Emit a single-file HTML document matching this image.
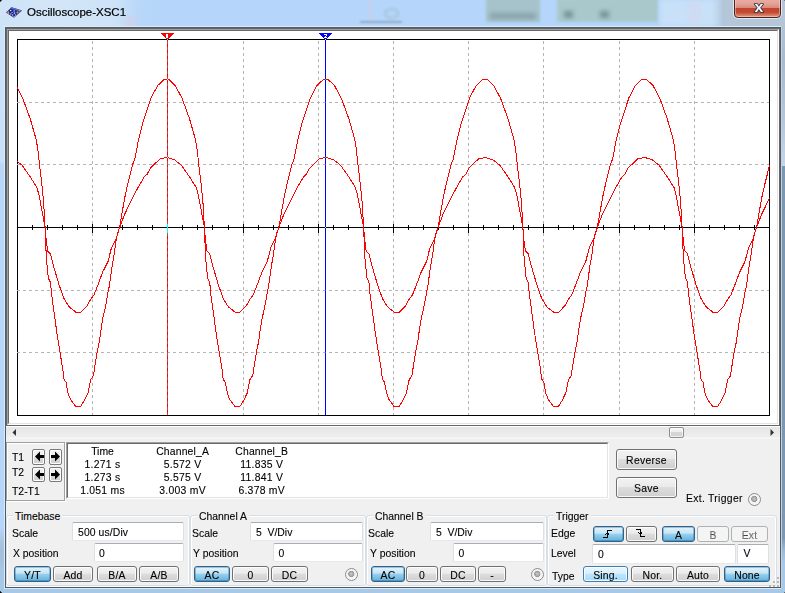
<!DOCTYPE html>
<html><head><meta charset="utf-8">
<style>
*{margin:0;padding:0;box-sizing:border-box}
html,body{width:785px;height:593px;overflow:hidden}
body{position:relative;background:#b5d6fa;font-family:"Liberation Sans",sans-serif;font-size:10.4px;color:#000;-webkit-text-stroke:0.1px #000}
.a{position:absolute}
.t{position:absolute;white-space:pre;line-height:12px;height:12px}
.c{text-align:center}
.btn{position:absolute;border:1px solid #707070;border-radius:3px;background:linear-gradient(#f2f2f2 0%,#ebebeb 45%,#dddddd 50%,#cfcfcf 100%);box-shadow:inset 0 0 0 1px rgba(255,255,255,.85);text-align:center;white-space:pre;line-height:14px;font-size:10.4px}
.on{border-color:#2c628b;background:linear-gradient(#e5f4fc 0%,#c4e5f6 45%,#98d1ef 50%,#64b0da 100%);box-shadow:inset 0 0 0 1px rgba(44,98,139,.35)}
.hov{border-color:#3c7fb1;background:linear-gradient(#eaf6fd 0%,#d9f0fc 45%,#bee6fd 50%,#a7d9f5 100%)}
.dis{border-color:#adb2b5;background:#f4f4f4;color:#838383;box-shadow:none}
.inp{position:absolute;background:#fff;border:1px solid #dbdfe6;border-top-color:#abadb3;border-bottom-color:#e3e9ef;border-radius:2px}
.gb{position:absolute;border:1px solid #d5dfe5;border-radius:3px;box-shadow:inset 1px 1px 0 #fff,inset -1px 0 0 #fff,0 1px 0 #fff}
.gt{position:absolute;background:#f0f0f0;white-space:pre;line-height:12px;padding:0 2px}
.radio{position:absolute;width:13px;height:13px;border-radius:50%;border:1px solid #8c8c8c;background:radial-gradient(circle at 48% 45%,#cfcfcf 0,#a8a8a8 2px,#969696 2.8px,#f2f2f2 3.4px,#fff 100%)}
</style></head><body>
<!-- title bar glass -->
<div class="a" style="left:0;top:0;width:785px;height:27px;background:linear-gradient(90deg,#cfe3f7 0px,#d3e6f8 60px,#cde2f8 115px,#b8d7f9 140px,#b5d6fa 160px,#b5d6fa 100%)"></div>
<div class="a" style="left:369px;top:0;width:2px;height:20px;background:#d8c8e0;filter:blur(1.2px);opacity:.8"></div>
<div class="a" style="left:124px;top:17px;width:12px;height:10px;background:#e0c8d8;filter:blur(3px);opacity:.45"></div>
<div class="a" style="left:384px;top:8px;width:15px;height:11px;border:2px solid #a4bcd4;border-radius:50%;filter:blur(1.5px);opacity:.8"></div>
<div class="a" style="left:360px;top:21px;width:42px;height:2px;background:#8aa2b8;filter:blur(1.2px);opacity:.85"></div>
<div class="a" style="left:486px;top:-2px;width:54px;height:24px;background:#a6c2ca;filter:blur(1.5px)"></div>
<div class="a" style="left:490px;top:13px;width:46px;height:6px;background:#88a4ac;filter:blur(2px)"></div>
<div class="a" style="left:557px;top:-2px;width:101px;height:24px;background:#a8c8cc;filter:blur(1.5px)"></div>
<div class="a" style="left:564px;top:11px;width:9px;height:7px;background:#7a9498;filter:blur(2px)"></div>
<div class="a" style="left:600px;top:11px;width:9px;height:7px;background:#7a9498;filter:blur(2px)"></div>
<div class="a" style="left:660px;top:0;width:60px;height:26px;background:#c8e0f8;filter:blur(2px)"></div>
<div class="a" style="left:690px;top:0;width:8px;height:26px;background:#d0d8f0;filter:blur(3px)"></div>
<div class="a" style="left:722px;top:0;width:63px;height:27px;background:#b4c6d8"></div>
<div class="a" style="left:712px;top:0;width:14px;height:27px;background:linear-gradient(90deg,rgba(180,198,216,0),#b4c6d8)"></div>
<!-- right frame -->
<div class="a" style="left:781px;top:18px;width:4px;height:575px;background:linear-gradient(#b4c6d8 0px,#a8bacc 40px,#b4c6d6 100px,#c6d6e6 148px,#7b97b1 148px,#7b97b1 520px,#9ab8d6 532px,#a8c8e8 545px,#a8c8e8 575px)"></div>
<div class="a" style="left:781px;top:27px;width:1px;height:561px;background:#c6d2de"></div>
<div class="a" style="left:4px;top:26px;width:777px;height:563px;border:1px solid #dcebfa"></div>
<div class="a" style="left:0;top:27px;width:4px;height:566px;background:linear-gradient(#cce2f8 0px,#c8e0f8 135px,#b8d8f8 137px,#b5d6fa 500px,#a8c0d8 520px,#a4c0dc 530px,#a8c8e8 545px,#a8c8e8 566px)"></div>
<div class="a" style="left:0;top:589px;width:785px;height:4px;background:#a8c8e8"></div>
<!-- icon -->
<svg class="a" style="left:4px;top:5px" width="20" height="15" viewBox="0 0 20 15">
<path d="M2,7.5 L7.5,2.3 L18,5.5 L10,12.7 Z" fill="#1c2c96"/>
<path d="M7.5,2.3 L18,5.5 L16.5,6.8 L6.3,3.5 Z" fill="#5468c0"/>
<g fill="#e8eefc"><rect x="6" y="5" width="1.3" height="1"/><rect x="9.5" y="5.5" width="1.3" height="1"/><rect x="9.8" y="7.5" width="1.3" height="1.2"/><rect x="6.3" y="8.5" width="1.2" height="1"/><rect x="8" y="9.5" width="1.2" height="1"/><rect x="11" y="9.5" width="1.2" height="1"/><rect x="9.5" y="11" width="1.2" height="0.8"/><rect x="7.5" y="7" width="1" height="0.8"/></g>
<g fill="#f0a020"><circle cx="4.2" cy="7.2" r="0.9"/><circle cx="4.6" cy="8.8" r="0.8"/><circle cx="13.5" cy="7.5" r="1"/><circle cx="15.4" cy="5.8" r="0.8"/></g>
</svg>
<div class="t" style="left:27px;top:6px;font-size:11.5px;line-height:13px;height:13px;color:#000;-webkit-text-stroke:0.2px #000">Oscilloscope-XSC1</div>
<!-- close button -->
<div class="a" style="left:734px;top:-3px;width:47px;height:21px;border:1px solid #4a2420;border-radius:0 0 4px 4px;background:linear-gradient(#eab0a6 0%,#e4a296 30%,#d88c80 50%,#c4432a 52%,#c24a32 75%,#d47a64 90%,#e29684 100%);box-shadow:inset 0 0 0 1px rgba(255,225,215,.45),0 0 0 1px rgba(240,248,255,.7)"></div>
<div class="a" style="left:0;top:0;width:1px;height:1px;background:#000"></div>
<div class="a" style="left:1px;top:0;width:1px;height:1px;background:#555"></div>
<div class="a" style="left:0;top:1px;width:1px;height:1px;background:#555"></div>
<div class="a" style="left:784px;top:0;width:1px;height:1px;background:#777"></div>
<div class="a" style="left:0;top:592px;width:1px;height:1px;background:#000"></div>
<div class="a" style="left:1px;top:592px;width:1px;height:1px;background:#444"></div>
<div class="a" style="left:0;top:591px;width:1px;height:1px;background:#444"></div>
<div class="a" style="left:784px;top:592px;width:1px;height:1px;background:#666"></div>
<svg class="a" style="left:750px;top:0px" width="18" height="16" viewBox="0 0 18 16">
<text x="8.5" y="12" text-anchor="middle" font-family="Liberation Sans" font-weight="bold" font-size="15" fill="#f8f8f8" stroke="#2c3445" stroke-width="1.7" stroke-linejoin="round" paint-order="stroke" transform="scale(1.06,1)">x</text>
</svg>
<!-- client -->
<div class="a" style="left:5px;top:27px;width:776px;height:561px;background:#f0f0f0;border:1px solid #4f5b68"></div>
<!-- display -->
<div class="a" style="left:6px;top:28px;width:774px;height:398px;border:1px solid #666"></div>
<div class="a" style="left:7px;top:29px;width:772px;height:396px;border:1px solid;border-color:#a0a0a0 #fff #fff #a0a0a0"></div>
<div class="a" style="left:8px;top:30px;width:770px;height:394px;border:1px solid;border-color:#696969 #e3e3e3 #e3e3e3 #696969;background:#fff"></div>
<svg class="a" style="left:0;top:0" width="785" height="593" shape-rendering="crispEdges">
<style>.g{stroke:#b4b4b4;stroke-width:1;stroke-dasharray:3 3}</style>
<rect x="17.5" y="39.5" width="752" height="376" fill="none" stroke="#000"/>
<line x1="92.5" y1="41" x2="92.5" y2="415" class="g"/>
<line x1="167.5" y1="41" x2="167.5" y2="415" class="g"/>
<line x1="243.5" y1="41" x2="243.5" y2="415" class="g"/>
<line x1="318.5" y1="41" x2="318.5" y2="415" class="g"/>
<line x1="393.5" y1="41" x2="393.5" y2="415" class="g"/>
<line x1="468.5" y1="41" x2="468.5" y2="415" class="g"/>
<line x1="543.5" y1="41" x2="543.5" y2="415" class="g"/>
<line x1="619.5" y1="41" x2="619.5" y2="415" class="g"/>
<line x1="694.5" y1="41" x2="694.5" y2="415" class="g"/>
<line x1="17" y1="102.5" x2="769" y2="102.5" class="g"/>
<line x1="17" y1="164.5" x2="769" y2="164.5" class="g"/>
<line x1="17" y1="227.5" x2="769" y2="227.5" class="g"/>
<line x1="17" y1="290.5" x2="769" y2="290.5" class="g"/>
<line x1="17" y1="352.5" x2="769" y2="352.5" class="g"/>
<line x1="17" y1="227.5" x2="770" y2="227.5" stroke="#000" stroke-width="1"/>
<path d="M17.5,224 V233 M32.5,225 V230 M47.5,225 V230 M62.5,225 V230 M77.5,225 V230 M92.5,224 V233 M107.5,225 V230 M122.5,225 V230 M137.5,225 V230 M152.5,225 V230 M167.5,224 V233 M182.5,225 V230 M197.5,225 V230 M212.5,225 V230 M228.5,225 V230 M243.5,224 V233 M258.5,225 V230 M273.5,225 V230 M288.5,225 V230 M303.5,225 V230 M318.5,224 V233 M333.5,225 V230 M348.5,225 V230 M363.5,225 V230 M378.5,225 V230 M393.5,224 V233 M408.5,225 V230 M423.5,225 V230 M438.5,225 V230 M453.5,225 V230 M468.5,224 V233 M483.5,225 V230 M498.5,225 V230 M513.5,225 V230 M528.5,225 V230 M543.5,224 V233 M558.5,225 V230 M573.5,225 V230 M588.5,225 V230 M603.5,225 V230 M619.5,224 V233 M634.5,225 V230 M649.5,225 V230 M664.5,225 V230 M679.5,225 V230 M694.5,224 V233 M709.5,225 V230 M724.5,225 V230 M739.5,225 V230 M754.5,225 V230 M769.5,224 V233" stroke="#000" stroke-width="1"/>
<path d="M17.0,87.4 L22.8,98.4 L30.2,118.7 L36.3,140.0 L38.0,150.7 L39.5,165.0 L41.4,180.5 L43.6,201.5 L45.1,227.5 L46.3,257.9 L48.3,278.1 L50.4,282.2 L51.8,295.7 L54.0,312.0 L56.8,332.2 L58.8,345.0 L60.8,357.2 L62.8,369.3 L63.8,379.0 L66.0,382.3 L68.2,393.8 L70.4,399.3 L75.9,406.9 L80.3,406.9 L84.1,400.9 L87.9,393.2 L90.8,379.5 L93.4,375.7 L95.6,361.5 L97.4,350.7 L99.4,341.2 L100.8,331.1 L102.8,318.3 L104.1,312.9 L106.1,303.4 L108.2,291.3 L109.4,285.7 L112.1,266.1 L114.1,254.6 L116.1,239.8 L117.6,233.0 L119.6,227.5 L122.6,209.9 L125.3,195.0 L127.4,185.6 L129.4,177.5 L132.8,164.0 L134.8,159.3 L138.1,141.9 L142.3,124.4 L145.1,116.1 L151.1,97.8 L157.6,85.7 L163.6,79.9 L167.2,79.8 L169.2,79.8 L175.3,85.6 L182.1,98.4 L189.5,118.7 L195.6,140.0 L197.3,150.7 L198.8,165.0 L200.7,180.5 L202.9,201.5 L204.4,227.5 L205.6,257.9 L207.6,278.1 L209.7,282.2 L211.0,295.7 L213.3,312.0 L216.0,332.2 L218.0,345.0 L220.0,357.2 L222.0,369.3 L223.1,379.0 L225.3,382.3 L227.5,393.8 L229.7,399.3 L235.2,406.9 L239.6,406.9 L243.4,400.9 L247.2,393.2 L250.0,379.5 L252.7,375.7 L254.9,361.5 L256.7,350.7 L258.7,341.2 L260.0,331.1 L262.1,318.3 L263.4,312.9 L265.4,303.4 L267.5,291.3 L268.7,285.7 L271.4,266.1 L273.4,254.6 L275.4,239.8 L276.8,233.0 L278.8,227.5 L281.9,209.9 L284.6,195.0 L286.7,185.6 L288.7,177.5 L292.1,164.0 L294.0,159.3 L297.4,141.9 L301.6,124.4 L304.4,116.1 L310.4,97.8 L316.8,85.7 L322.9,79.9 L326.4,79.8 L328.4,79.8 L334.5,85.6 L341.4,98.4 L348.8,118.7 L354.9,140.0 L356.5,150.7 L358.0,165.0 L359.9,180.5 L362.1,201.5 L363.6,227.5 L364.9,257.9 L366.9,278.1 L368.9,282.2 L370.2,295.7 L372.5,312.0 L375.2,332.2 L377.2,345.0 L379.2,357.2 L381.2,369.3 L382.4,379.0 L384.5,382.3 L386.8,393.8 L388.9,399.3 L394.4,406.9 L398.9,406.9 L402.6,400.9 L406.4,393.2 L409.2,379.5 L411.9,375.7 L414.1,361.5 L415.9,350.7 L417.9,341.2 L419.2,331.1 L421.3,318.3 L422.6,312.9 L424.6,303.4 L426.8,291.3 L427.9,285.7 L430.6,266.1 L432.6,254.6 L434.6,239.8 L436.1,233.0 L438.1,227.5 L441.1,209.9 L443.8,195.0 L445.9,185.6 L447.9,177.5 L451.3,164.0 L453.2,159.3 L456.6,141.9 L460.8,124.4 L463.6,116.1 L469.6,97.8 L476.1,85.7 L482.1,79.9 L485.7,79.8 L487.7,79.8 L493.8,85.6 L500.6,98.4 L508.0,118.7 L514.1,140.0 L515.8,150.7 L517.3,165.0 L519.2,180.5 L521.4,201.5 L522.9,227.5 L524.1,257.9 L526.1,278.1 L528.2,282.2 L529.5,295.7 L531.8,312.0 L534.5,332.2 L536.5,345.0 L538.5,357.2 L540.5,369.3 L541.6,379.0 L543.8,382.3 L546.0,393.8 L548.2,399.3 L553.7,406.9 L558.1,406.9 L561.9,400.9 L565.7,393.2 L568.5,379.5 L571.2,375.7 L573.4,361.5 L575.2,350.7 L577.2,341.2 L578.5,331.1 L580.6,318.3 L581.9,312.9 L583.9,303.4 L586.0,291.3 L587.2,285.7 L589.9,266.1 L591.9,254.6 L593.9,239.8 L595.3,233.0 L597.3,227.5 L600.4,209.9 L603.1,195.0 L605.2,185.6 L607.2,177.5 L610.6,164.0 L612.5,159.3 L615.9,141.9 L620.1,124.4 L622.9,116.1 L628.9,97.8 L635.3,85.7 L641.4,79.9 L645.0,79.8 L647.0,79.8 L653.0,85.6 L659.9,98.4 L667.2,118.7 L673.4,140.0 L675.0,150.7 L676.5,165.0 L678.5,180.5 L680.6,201.5 L682.1,227.5 L683.4,257.9 L685.4,278.1 L687.5,282.2 L688.8,295.7 L691.0,312.0 L693.8,332.2 L695.8,345.0 L697.8,357.2 L699.8,369.3 L700.9,379.0 L703.0,382.3 L705.2,393.8 L707.5,399.3 L713.0,406.9 L717.4,406.9 L721.1,400.9 L725.0,393.2 L727.8,379.5 L730.5,375.7 L732.6,361.5 L734.5,350.7 L736.5,341.2 L737.8,331.1 L739.8,318.3 L741.1,312.9 L743.1,303.4 L745.2,291.3 L746.5,285.7 L749.1,266.1 L751.1,254.6 L753.1,239.8 L754.5,233.0 L756.5,227.5 L759.6,209.9 L762.3,195.0 L764.5,185.6 L766.5,177.5 L769.5,165.4" stroke="#f00" stroke-width="1" fill="none"/>
<path d="M17.0,161.2 L22.1,165.3 L30.2,176.8 L36.9,187.5 L39.0,195.0 L45.1,227.5 L46.3,241.7 L47.8,251.1 L50.4,253.8 L53.1,264.6 L59.1,284.9 L63.9,298.4 L67.9,305.1 L69.5,307.2 L75.6,312.0 L81.0,312.0 L87.0,305.9 L90.6,299.4 L94.0,294.7 L98.1,284.5 L102.6,272.2 L108.1,261.4 L111.4,247.9 L116.1,238.5 L119.6,227.5 L124.8,213.9 L131.4,200.4 L137.6,188.3 L144.3,176.8 L147.2,174.2 L150.2,168.3 L153.6,165.0 L160.3,158.6 L165.4,157.8 L167.2,157.5 L174.6,159.9 L181.4,165.3 L189.5,176.8 L196.2,187.5 L198.3,195.0 L204.4,227.5 L205.6,241.7 L207.0,251.1 L209.7,253.8 L212.4,264.6 L218.4,284.9 L223.2,298.4 L227.2,305.1 L228.8,307.2 L234.9,312.0 L240.3,312.0 L246.3,305.9 L249.9,299.4 L253.3,294.7 L257.3,284.5 L261.9,272.2 L267.3,261.4 L270.7,247.9 L275.4,238.5 L278.8,227.5 L284.0,213.9 L290.7,200.4 L296.8,188.3 L303.6,176.8 L306.5,174.2 L309.5,168.3 L312.8,165.0 L319.6,158.6 L324.7,157.8 L326.4,157.5 L333.9,159.9 L340.6,165.3 L348.8,176.8 L355.4,187.5 L357.5,195.0 L363.6,227.5 L364.9,241.7 L366.2,251.1 L368.9,253.8 L371.6,264.6 L377.6,284.9 L382.4,298.4 L386.4,305.1 L388.0,307.2 L394.1,312.0 L399.5,312.0 L405.5,305.9 L409.1,299.4 L412.5,294.7 L416.6,284.5 L421.1,272.2 L426.6,261.4 L429.9,247.9 L434.6,238.5 L438.1,227.5 L443.2,213.9 L449.9,200.4 L456.1,188.3 L462.8,176.8 L465.8,174.2 L468.8,168.3 L472.1,165.0 L478.8,158.6 L483.9,157.8 L485.7,157.5 L493.1,159.9 L499.9,165.3 L508.0,176.8 L514.7,187.5 L516.8,195.0 L522.9,227.5 L524.1,241.7 L525.5,251.1 L528.2,253.8 L530.9,264.6 L536.9,284.9 L541.7,298.4 L545.7,305.1 L547.3,307.2 L553.4,312.0 L558.8,312.0 L564.8,305.9 L568.4,299.4 L571.8,294.7 L575.8,284.5 L580.4,272.2 L585.8,261.4 L589.2,247.9 L593.9,238.5 L597.3,227.5 L602.5,213.9 L609.2,200.4 L615.3,188.3 L622.1,176.8 L625.0,174.2 L628.0,168.3 L631.3,165.0 L638.1,158.6 L643.2,157.8 L645.0,157.5 L652.4,159.9 L659.1,165.3 L667.2,176.8 L674.0,187.5 L676.0,195.0 L682.1,227.5 L683.4,241.7 L684.8,251.1 L687.5,253.8 L690.1,264.6 L696.1,284.9 L701.0,298.4 L705.0,305.1 L706.5,307.2 L712.6,312.0 L718.0,312.0 L724.0,305.9 L727.6,299.4 L731.0,294.7 L735.0,284.5 L739.6,272.2 L745.0,261.4 L748.5,247.9 L753.1,238.5 L756.5,227.5 L761.8,213.9 L768.5,200.4 L769.5,198.3" stroke="#f00" stroke-width="1" fill="none"/>
<g style="mix-blend-mode:difference"><line x1="167.5" y1="39" x2="167.5" y2="415" stroke="#0ff"/><line x1="325.5" y1="39" x2="325.5" y2="415" stroke="#ff0"/></g>
<rect x="161" y="33" width="13" height="1" fill="#f00"/><rect x="162" y="34" width="11" height="1" fill="#f00"/><rect x="163" y="35" width="9" height="1" fill="#f00"/><rect x="164" y="36" width="7" height="1" fill="#f00"/><rect x="165" y="37" width="5" height="1" fill="#f00"/><rect x="166" y="38" width="3" height="1" fill="#f00"/><rect x="166" y="34" width="2" height="1" fill="#fff"/><rect x="166" y="35" width="2" height="1" fill="#fff"/><rect x="166" y="36" width="2" height="1" fill="#fff"/><rect x="166" y="37" width="2" height="1" fill="#fff"/>
<rect x="319" y="33" width="13" height="1" fill="#00f"/><rect x="320" y="34" width="11" height="1" fill="#00f"/><rect x="321" y="35" width="9" height="1" fill="#00f"/><rect x="322" y="36" width="7" height="1" fill="#00f"/><rect x="323" y="37" width="5" height="1" fill="#00f"/><rect x="324" y="38" width="3" height="1" fill="#00f"/><rect x="324" y="34" width="3" height="1" fill="#fff"/><rect x="326" y="35" width="1" height="1" fill="#fff"/><rect x="325" y="36" width="1" height="1" fill="#fff"/><rect x="324" y="37" width="3" height="1" fill="#fff"/>
</svg>
<!-- scrollbar -->
<div class="a" style="left:6px;top:426px;width:774px;height:13px;background:linear-gradient(#fff 0,#fff 1px,#e6e6e6 1px,#eeeeee 11px,#f7f7f7 12px)"></div>
<svg class="a" style="left:11px;top:428px" width="7" height="10"><path d="M5,1 L1.5,4.5 L5,8 Z" fill="#333"/></svg>
<svg class="a" style="left:768px;top:428px" width="8" height="10"><path d="M2.5,1 L6,4.5 L2.5,8 Z" fill="#333"/></svg>
<div class="a" style="left:669px;top:427px;width:15px;height:11px;border:1px solid #8e8e8e;border-radius:2px;background:linear-gradient(#f6f6f6 0,#ececec 45%,#d6d6d6 50%,#d0d0d0 100%);box-shadow:inset 0 0 0 1px rgba(255,255,255,.7)"></div>
<!-- T1 T2 panel -->
<div class="a" style="left:7px;top:443px;width:59px;height:59px;border:1px solid #fff"></div>
<div class="a" style="left:6px;top:442px;width:59px;height:59px;border:1px solid #a0a0a0"></div>
<div class="a" style="left:32px;top:449px;width:13px;height:16px;border:1px solid #7a7a7a;border-radius:2px;background:linear-gradient(#f0f0f0 0%,#ececec 50%,#d8d8d8 55%,#d0d0d0 100%);box-shadow:inset 0 0 0 1px #fff"></div>
<svg class="a" style="left:33px;top:450px" width="12" height="13"><path d="M2,6.5 L7,1.5 L7,5 L11,5 L11,8 L7,8 L7,11.5 Z" fill="#000"/></svg>
<div class="a" style="left:49px;top:449px;width:13px;height:16px;border:1px solid #7a7a7a;border-radius:2px;background:linear-gradient(#f0f0f0 0%,#ececec 50%,#d8d8d8 55%,#d0d0d0 100%);box-shadow:inset 0 0 0 1px #fff"></div>
<svg class="a" style="left:50px;top:450px" width="12" height="13"><path d="M10,6.5 L5,1.5 L5,5 L1,5 L1,8 L5,8 L5,11.5 Z" fill="#000"/></svg>
<div class="a" style="left:32px;top:467px;width:13px;height:15px;border:1px solid #7a7a7a;border-radius:2px;background:linear-gradient(#f0f0f0 0%,#ececec 50%,#d8d8d8 55%,#d0d0d0 100%);box-shadow:inset 0 0 0 1px #fff"></div>
<svg class="a" style="left:33px;top:468px" width="12" height="13"><path d="M2,6.5 L7,1.5 L7,5 L11,5 L11,8 L7,8 L7,11.5 Z" fill="#000"/></svg>
<div class="a" style="left:49px;top:467px;width:13px;height:15px;border:1px solid #7a7a7a;border-radius:2px;background:linear-gradient(#f0f0f0 0%,#ececec 50%,#d8d8d8 55%,#d0d0d0 100%);box-shadow:inset 0 0 0 1px #fff"></div>
<svg class="a" style="left:50px;top:468px" width="12" height="13"><path d="M10,6.5 L5,1.5 L5,5 L1,5 L1,8 L5,8 L5,11.5 Z" fill="#000"/></svg>
<div class="t" style="top:452px;left:12px;">T1</div>
<div class="t" style="top:467px;left:12px;">T2</div>
<div class="t" style="top:486px;left:12px;">T2-T1</div>
<!-- data panel -->
<div class="a" style="left:66px;top:442px;width:543px;height:57px;border:1px solid;border-color:#a0a0a0 #fff #fff #a0a0a0"></div>
<div class="a" style="left:67px;top:443px;width:541px;height:55px;border:1px solid;border-color:#696969 #e3e3e3 #e3e3e3 #696969;background:#fff"></div>
<div class="t" style="top:446px;left:42.50px;width:120px;text-align:center;">Time</div>
<div class="t" style="top:459px;letter-spacing:0.25px;left:42.50px;width:120px;text-align:center;">1.271 s</div>
<div class="t" style="top:472px;letter-spacing:0.25px;left:42.50px;width:120px;text-align:center;">1.273 s</div>
<div class="t" style="top:485px;letter-spacing:0.25px;left:42.50px;width:120px;text-align:center;">1.051 ms</div>
<div class="t" style="top:446px;letter-spacing:0.15px;left:122.60px;width:120px;text-align:center;">Channel_A</div>
<div class="t" style="top:459px;letter-spacing:0.25px;left:122.60px;width:120px;text-align:center;">5.572 V</div>
<div class="t" style="top:472px;letter-spacing:0.25px;left:122.60px;width:120px;text-align:center;">5.575 V</div>
<div class="t" style="top:485px;letter-spacing:0.25px;left:122.60px;width:120px;text-align:center;">3.003 mV</div>
<div class="t" style="top:446px;letter-spacing:0.15px;left:201.70px;width:120px;text-align:center;">Channel_B</div>
<div class="t" style="top:459px;letter-spacing:0.25px;left:201.70px;width:120px;text-align:center;">11.835 V</div>
<div class="t" style="top:472px;letter-spacing:0.25px;left:201.70px;width:120px;text-align:center;">11.841 V</div>
<div class="t" style="top:485px;letter-spacing:0.25px;left:201.70px;width:120px;text-align:center;">6.378 mV</div>
<div class="btn " style="left:616px;top:449px;width:61px;height:21px"></div><div class="t" style="left:606.5px;width:80px;text-align:center;top:455px;letter-spacing:0.3px;">Reverse</div>
<div class="btn " style="left:616px;top:477px;width:61px;height:21px"></div><div class="t" style="left:606.5px;width:80px;text-align:center;top:483px;letter-spacing:0.3px;">Save</div>
<div class="t" style="top:493px;letter-spacing:0.3px;left:686px;">Ext. Trigger</div>
<div class="radio" style="left:748px;top:493px"></div>
<!-- groupboxes -->
<div class="gb" style="left:6px;top:515px;width:184px;height:71px"></div>
<div class="gb" style="left:190px;top:515px;width:176px;height:71px"></div>
<div class="gb" style="left:366px;top:515px;width:181px;height:71px"></div>
<div class="gb" style="left:547px;top:515px;width:230px;height:71px"></div>
<div class="gt" style="left:13px;top:511px">Timebase</div>
<div class="gt" style="left:197px;top:511px">Channel A</div>
<div class="gt" style="left:373px;top:511px">Channel B</div>
<div class="gt" style="left:554px;top:511px">Trigger</div>
<div class="t" style="top:528px;left:12px;">Scale</div>
<div class="t" style="top:548px;left:13px;">X position</div>
<div class="inp" style="left:72px;top:522px;width:112px;height:19px"></div>
<div class="t" style="top:527px;letter-spacing:0.1px;left:78px;">500 us/Div</div>
<div class="inp" style="left:94px;top:543px;width:90px;height:19px"></div>
<div class="t" style="top:548px;left:99px;">0</div>
<div class="btn on" style="left:14px;top:566px;width:37px;height:16px"></div><div class="t" style="left:-7.5px;width:80px;text-align:center;top:570px;letter-spacing:0.3px;">Y/T</div>
<div class="btn " style="left:53px;top:566px;width:40px;height:16px"></div><div class="t" style="left:33.0px;width:80px;text-align:center;top:570px;letter-spacing:0.2px;">Add</div>
<div class="btn " style="left:97px;top:566px;width:40px;height:16px"></div><div class="t" style="left:77.0px;width:80px;text-align:center;top:570px;letter-spacing:0.2px;">B/A</div>
<div class="btn " style="left:139px;top:566px;width:40px;height:16px"></div><div class="t" style="left:119.0px;width:80px;text-align:center;top:570px;letter-spacing:0.2px;">A/B</div>
<div class="t" style="top:528px;left:192px;">Scale</div>
<div class="t" style="top:548px;left:193px;">Y position</div>
<div class="inp" style="left:250px;top:522px;width:113px;height:19px"></div>
<div class="t" style="top:527px;left:256px;">5  V/Div</div>
<div class="inp" style="left:273px;top:543px;width:90px;height:19px"></div>
<div class="t" style="top:548px;left:278.5px;">0</div>
<div class="btn on" style="left:194px;top:566px;width:36px;height:16px"></div><div class="t" style="left:172.0px;width:80px;text-align:center;top:570px;letter-spacing:0.2px;">AC</div>
<div class="btn " style="left:232px;top:566px;width:37px;height:16px"></div><div class="t" style="left:210.5px;width:80px;text-align:center;top:570px;">0</div>
<div class="btn " style="left:271px;top:566px;width:37px;height:16px"></div><div class="t" style="left:249.5px;width:80px;text-align:center;top:570px;letter-spacing:0.2px;">DC</div>
<div class="radio" style="left:345px;top:568px"></div>
<div class="t" style="top:528px;left:368px;">Scale</div>
<div class="t" style="top:548px;left:370px;">Y position</div>
<div class="inp" style="left:430px;top:522px;width:114px;height:19px"></div>
<div class="t" style="top:527px;left:436px;">5  V/Div</div>
<div class="inp" style="left:453px;top:543px;width:91px;height:19px"></div>
<div class="t" style="top:548px;left:458.5px;">0</div>
<div class="btn on" style="left:371px;top:566px;width:34px;height:16px"></div><div class="t" style="left:348.0px;width:80px;text-align:center;top:570px;letter-spacing:0.2px;">AC</div>
<div class="btn " style="left:406px;top:566px;width:32px;height:16px"></div><div class="t" style="left:382.0px;width:80px;text-align:center;top:570px;">0</div>
<div class="btn " style="left:440px;top:566px;width:36px;height:16px"></div><div class="t" style="left:418.0px;width:80px;text-align:center;top:570px;letter-spacing:0.2px;">DC</div>
<div class="btn " style="left:478px;top:566px;width:28px;height:16px"></div><div class="t" style="left:452.0px;width:80px;text-align:center;top:570px;">-</div>
<div class="radio" style="left:531px;top:568px"></div>
<div class="t" style="top:528px;left:551px;">Edge</div>
<div class="t" style="top:548px;left:551px;">Level</div>
<div class="t" style="top:571px;left:552px;">Type</div>
<div class="btn on" style="left:593px;top:526px;width:31px;height:16px"></div><div class="t" style="left:568.5px;width:80px;text-align:center;top:530px;"></div>
<div class="btn " style="left:626px;top:526px;width:31px;height:16px"></div><div class="t" style="left:601.5px;width:80px;text-align:center;top:530px;"></div>
<svg class="a" style="left:593px;top:526px" width="70" height="16" shape-rendering="crispEdges"><path d="M10,11.5 H14.5 V4.5 H19 M12,8.5 h1 M13,7.5 h3 M15,8.5 h1" stroke="#000" fill="none"/><path d="M43,3.5 H47.5 V10.5 H52 M45,6.5 h1 M46,7.5 h3 M48,6.5 h1" stroke="#000" fill="none"/></svg>
<div class="btn on" style="left:662px;top:526px;width:33px;height:16px"></div><div class="t" style="left:638.5px;width:80px;text-align:center;top:530px;">A</div>
<div class="btn dis" style="left:697px;top:526px;width:32px;height:16px"></div><div class="t" style="left:673.0px;width:80px;text-align:center;top:530px;color:#838383;">B</div>
<div class="btn dis" style="left:731px;top:526px;width:37px;height:16px"></div><div class="t" style="left:709.5px;width:80px;text-align:center;top:530px;color:#838383;letter-spacing:0.1px;">Ext</div>
<div class="inp" style="left:592px;top:544px;width:144px;height:20px"></div>
<div class="t" style="top:549px;left:598px;">0</div>
<div class="inp" style="left:737px;top:544px;width:32px;height:20px"></div>
<div class="t" style="top:548px;left:743.5px;">V</div>
<div class="btn hov" style="left:583px;top:566px;width:45px;height:16px"></div><div class="t" style="left:565.5px;width:80px;text-align:center;top:570px;letter-spacing:0.2px;">Sing.</div>
<div class="btn " style="left:631px;top:566px;width:43px;height:16px"></div><div class="t" style="left:612.5px;width:80px;text-align:center;top:570px;letter-spacing:0.2px;">Nor.</div>
<div class="btn " style="left:676px;top:566px;width:44px;height:16px"></div><div class="t" style="left:658.0px;width:80px;text-align:center;top:570px;letter-spacing:0.2px;">Auto</div>
<div class="btn on" style="left:724px;top:566px;width:46px;height:16px"></div><div class="t" style="left:707.0px;width:80px;text-align:center;top:570px;letter-spacing:0.2px;">None</div>
<div class="a" style="left:777px;top:577px;width:2px;height:2px;background:#b8b8b8"></div>
<div class="a" style="left:777px;top:581px;width:2px;height:2px;background:#b8b8b8"></div>
<div class="a" style="left:773px;top:581px;width:2px;height:2px;background:#b8b8b8"></div>
<div class="a" style="left:777px;top:585px;width:2px;height:2px;background:#b8b8b8"></div>
<div class="a" style="left:773px;top:585px;width:2px;height:2px;background:#b8b8b8"></div>
<div class="a" style="left:769px;top:585px;width:2px;height:2px;background:#b8b8b8"></div>
</body></html>
